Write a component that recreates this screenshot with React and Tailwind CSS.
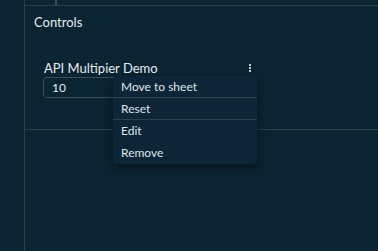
import React from "react";

function Kebab() {
  return (
    <div className="flex flex-col gap-[1px] items-center w-[6px]">
      <span className="block w-[2px] h-[2px] bg-[#c7d0d8]" />
      <span className="block w-[2px] h-[2px] bg-[#c7d0d8]" />
      <span className="block w-[2px] h-[2px] bg-[#c7d0d8]" />
    </div>
  );
}

export default function App() {
  const items = ["Move to sheet", "Reset", "Edit", "Remove"];
  return (
    <div
      className="w-[378px] h-[251px] bg-[#0a2432] flex text-[#e6ebef] overflow-hidden"
      style={{ fontFamily: 'Lato, "Noto Sans", sans-serif' }}
    >
      <div className="w-[25px] h-full border-r border-[#2a3f4c]" />
      <div className="flex-1 flex flex-col">
        <div className="h-[6px] border-b border-[#2a3f4c] relative">
          <div className="absolute left-[30px] top-0 w-[2px] h-[5px] bg-[#3d5260]" />
        </div>
        <div className="px-[9px] pt-[6px] text-[13px] leading-[20px]">Controls</div>
        <div className="relative h-[98px] border-b border-[#2a3f4c]">
          <div className="absolute left-[19px] top-[26px] w-[209px] flex items-center justify-between">
            <span className="text-[13px] leading-[20px]">API Multipier Demo</span>
            <Kebab />
          </div>
          <div className="absolute left-[18px] top-[45px] w-[200px] h-[21px] rounded-[4px] border border-[#3a4d59] flex items-center px-[8px] text-[12px]">
            10
          </div>
          <div className="absolute left-[88px] top-[44px] w-[144px] rounded-[4px] bg-[#0c2637] shadow-[0_4px_10px_rgba(0,0,0,0.45)] z-10">
            {items.map((t, i) => (
              <div
                key={t}
                className={
                  "px-[8px] h-[22px] flex items-center text-[12px] text-[#dfe5ea] " +
                  (i < 2 ? "border-b border-[#2a3f4c]" : "")
                }
              >
                {t}
              </div>
            ))}
          </div>
        </div>
      </div>
    </div>
  );
}
